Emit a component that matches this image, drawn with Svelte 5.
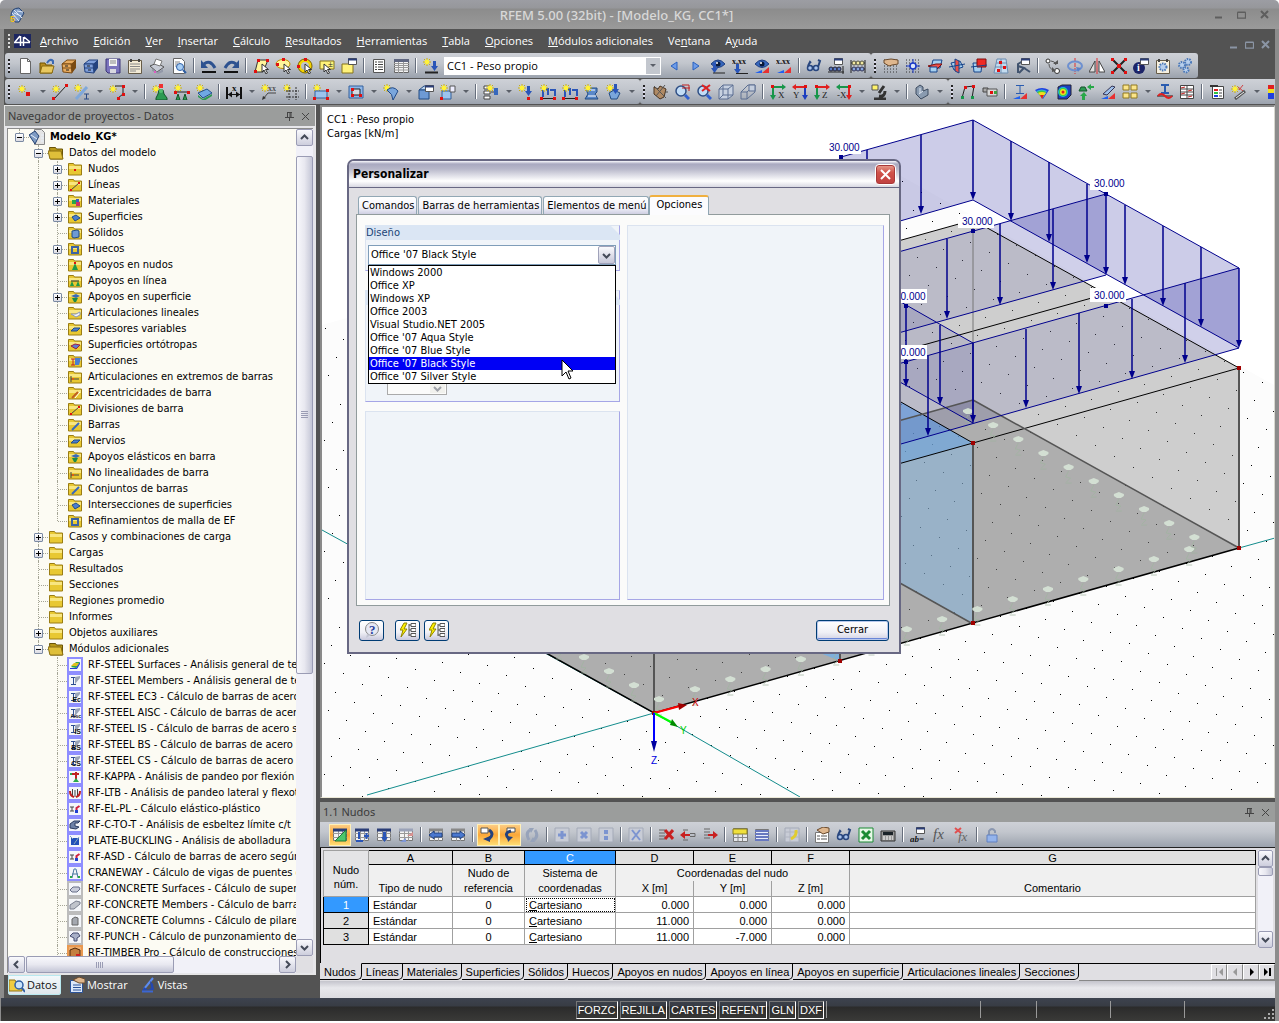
<script>
    // small drawing helpers for the 16x16 icons
    const ln = (d, c = '#222', w = 1) => `<path d="${d}" fill="none" stroke="${c}" stroke-width="${w}"/>`;
    const fl = (d, c, s = 'none') => `<path d="${d}" fill="${c}" stroke="${s}"/>`;
    const sq = (x, y, c = '#e01010', n = 3) => `<rect x="${x}" y="${y}" width="${n}" height="${n}" fill="${c}"/>`;
    const tx = (x, y, t, c = '#222', n = 8, extra = '') => `<text x="${x}" y="${y}" font-size="${n}" fill="${c}" font-family="Liberation Serif, serif" ${extra}>${t}</text>`;
    const star = (x = 0, y = 0) =>
        ln(`M${x + 4} ${y}v8M${x} ${y + 4}h8M${x + 1} ${y + 1}l6 6M${x + 7} ${y + 1}l-6 6`, '#c8ae10') +
        `<circle cx="${x + 4}" cy="${y + 4}" r="2.4" fill="#fff23a"/>`;
    const cursor = (x, y) => fl(`M${x} ${y}v8l2-2 2 4 1.500-1-2-3.500h3z`, '#fff', '#333');
    const arrow = (x, y, c = '#2a55b8') => fl(`M${x} ${y}h3v5h2l-3.500 5-3.500-5h2z`, c);
    const win = (x, y, c = '#fff') => fl(`M${x + 0.5} ${y + 0.5}h8v6h-8z`, c, '#555') + ln(`M${x} ${y + 1.5}h9`, '#2b3e78', 2);
    const eye = fl('M1 6q7-8 14 0q-7 7-14 0z', '#3768bd', '#1e3d80') + '<circle cx="8" cy="6" r="2.500" fill="#081838"/><circle cx="7" cy="5" r="1" fill="#fff"/>';
    const diagram = fl('M1 15h7v-3z', '#2060f0') + fl('M8 15h7v-6z', '#e83030');
    const dots = [2, 5, 8, 11, 14].map((a) => ln(`M1 ${a}h14`, '#333', 1).replace('/>', ' stroke-dasharray="1 2"/>')).join('');
    const glasses = '<g fill="#a9c4ee" stroke="#28467e" stroke-width="1.500"><circle cx="4" cy="10" r="2.500"/><circle cx="10" cy="10" r="2.500"/></g>' + ln('M2 8l2-4 1 1M6 9h2M12 9l2-6-2-1', '#28467e', 2);
    const gear = (x, y, r, c = '#4a78b8') => `<circle cx="${x}" cy="${y}" r="${r}" fill="#b8cfec" stroke="${c}" stroke-width="2" stroke-dasharray="1.500 1"/>`;
    const sheet = (head) => fl('M1.500 2.500h13v11h-13z', '#f4f4f4', '#777') + ln('M1 6.500h14M1 10.500h14M6.500 3v11M10.500 3v11', '#999') + ln('M1 3h14', head, 3);
    const cabinet = (c, d) => fl('M1 6l5-4h9l-4 4z', c, d) + fl('M1 6h9l1 9-9-1z', c, d) + fl('M10 6l5-4v8l-4 5z', d) + ln('M1 10h10', d) + ln('M4 8h3M5 12h3', '#222');
    const plane = (c1, c2) => fl('M2 5l9-2 3 6-9 3z', c1, '#17448a') + fl('M6 1l4 2v12l-4-2z', c2, '#17448a') + ln('M0 9l16-3', '#17448a');
    const person = fl('M7 6h4l1 4 3 4v2H4v-2l2-4z', '#2d9a52', '#14542a') + '<circle cx="9" cy="7" r="2" fill="#53bd70"/>';
    const axes = (c1, c2, t) => ln('M2 3h11', c1, 2) + fl('M12 0l4 3-4 3z', c1) + ln('M3 3v11', c2, 2) + fl('M0 11h6l-3 5z', c2) + sq(1, 1) + tx(8, 14, t, '#222', 9);
    const axesLeft = (c1, c2, t) => ln('M3 3h11', c1, 2) + fl('M4 0L0 3l4 3z', c1) + ln('M13 3v11', c2, 2) + fl('M10 11h6l-3 5z', c2) + sq(12, 1) + tx(1, 14, t, '#222', 9);
    const folderTabs = [[1, 1], [9, 1], [1, 9], [9, 9]].map(([x, y]) => fl(`M${x} ${y}h6v5H${x}z`, '#fbe58a', '#907820')).join('');

    const icons = {
        app: fl('M2 9q0-8 8-8l5 5-5 9H6z', '#7e9bc4', '#254272') + ln('M5 3l8 8M3 6l7 8M14 5L8 4M12 9L5 6', '#dfe9f8') + `<text x="1" y="15" font-size="9" font-weight="700" fill="#f5c518" font-family="Liberation Sans">5</text>`,
        new: fl('M3.500 .5h7l3 3v12h-10z', '#fff', '#666') + ln('M10.500 .5v3h3', '#666'),
        open: fl('M1 5h5l1 2h6v8H1z', '#b98d20', '#705400') + fl('M3 8h12l-2 7H1z', '#e8c860', '#8a6a10') + ln('M8 5q3-5 6-2v3', '#3a6ab4', 2),
        cabinet: cabinet('#e8ac60', '#7a4a12'),
        cabinet2: cabinet('#7f9fda', '#23427f'),
        save: fl('M1 1h14v14H3l-2-2z', '#7b74bd', '#3c3678') + fl('M4 1h8v7H4z', '#f4f4f4') + ln('M5 3h6M5 5h6', '#888') + fl('M5 11h6v4H5z', '#d8d8e0'),
        props: fl('M1.500 2.500h13v13h-13z', '#f3ebd6', '#665c48') + ln('M3 6h10M3 8.500h10M3 11h10M3 13h6', '#888') + ln('M4 1v3M12 1v3', '#444', 2),
        print: fl('M1 8l7-3 7 4-7 5z', '#c8ccd6', '#555') + fl('M5 6L7 1l6 2-2 5z', '#fff', '#777') + fl('M3 11l6 3 5-3v3l-5 2-6-3z', '#9298a8') + sq(5, 13, '#df5ac0', 2),
        preview: fl('M2.500 .5h8l3 3v12h-11z', '#fff', '#666') + ln('M4 4h5M4 6h3M4 8h3', '#888') + '<circle cx="9" cy="9" r="3.500" fill="#a9cff5" stroke="#2f5fa5"/>' + ln('M12 12l3 3', '#2f5fa5', 2),
        undo: ln('M3 6q6-5 11 4', '#2d5290', 3) + fl('M0 2v8h7z', '#2d5290') + ln('M1 14h14', '#111', 2),
        redo: ln('M13 6Q7 1 2 10', '#2d5290', 3) + fl('M16 2v8H9z', '#2d5290') + ln('M1 14h14', '#111', 2),
        selpoly: fl('M5 2l10 0-5 12H2z', '#fff59a', '#333') + sq(4, 1) + sq(13, 1) + sq(1, 12) + cursor(9, 6),
        selellipse: '<ellipse cx="8" cy="6" rx="7" ry="4.500" fill="#fff59a" stroke="#c09000"/>' + sq(1, 5) + sq(7, 0) + cursor(9, 6),
        selring: '<circle cx="8" cy="8" r="5.500" fill="none" stroke="#f4d400" stroke-width="3"/><circle cx="8" cy="8" r="7" fill="none" stroke="#7c6400"/>' + sq(7, 0) + sq(0, 7) + cursor(8, 6),
        selpm: fl('M1 3h14v8H1z', '#fff27a', '#86751a') + tx(9, 9, '±', '#222', 9) + cursor(5, 6),
        selnote: fl('M1 6h11v9H1z', '#fff27a', '#86751a') + win(7, 0),
        doclist: fl('M2.500 1.500h11v13h-11z', '#fff', '#555') + ln('M4 4h2M7 4h5M4 6.500h2M7 6.500h5M4 9h2M7 9h5M4 11.500h2M7 11.500h5', '#444'),
        grid: fl('M1.500 1.500h14v13h-14z', '#f4f4f4', '#666') + ln('M1 5.500h15M1 7.500h15M1 9.500h15M1 12h15M5.500 4v11M10.500 4v11', '#999') + ln('M1 2.500h15', '#5f6680', 3),
        loadnew: star() + arrow(10, 3) + ln('M2 14.500h13', '#222', 2),
        prev: fl('M11 4v8L5 8z', '#6f9ce8', '#2a62c0'),
        next: fl('M5 4v8l6-4z', '#6f9ce8', '#2a62c0'),
        eyeload: eye + arrow(3, 5) + ln('M3 15h12', '#222'),
        xxload: tx(0, 6, 'x.xx', '#111', 8, 'font-weight="700"') + arrow(4, 6) + ln('M4 15.500h12', '#222'),
        eyediag: eye + diagram,
        xxdiag: tx(0, 6, 'x.xx', '#111', 8, 'font-weight="700"') + diagram,
        glasses,
        winbeads: win(6, 0) + '<g fill="#5b7dc8" stroke="#223"><circle cx="3" cy="11" r="2"/><circle cx="7" cy="11" r="2"/><circle cx="11" cy="11" r="2"/></g>' + ln('M0 14h16M15 8v8', '#222'),
        beads: ln('M1 5h14M1 11h14M1 2v13M15 2v13', '#222') + '<g fill="#f2e9a0" stroke="#554"><circle cx="4" cy="5" r="2"/><circle cx="8" cy="5" r="2"/><circle cx="12" cy="5" r="2"/></g><g fill="#86a7e0" stroke="#335"><circle cx="4" cy="11" r="2"/><circle cx="8" cy="11" r="2"/><circle cx="12" cy="11" r="2"/></g>',
        handgrid: dots + fl('M1 2l7-1 7 1v4l-6 1-3 1-5-3z', '#dfb78e', '#6a4a2c'),
        snapgrid: dots + ln('M8 1v14M1 8h14', '#1838c8') + '<circle cx="8" cy="8" r="3" fill="#dce6fa" stroke="#1838c8" stroke-width="1.500"/>',
        plane1: fl('M6 2l9 0-2 8H4z', '#a6d0f0', '#17448a') + fl('M1 8l8-2 6 0-5 5z', '#f05048', '#7c1010') + fl('M3 9h7v5H3z', '#a6d0f0', '#17448a'),
        plane2: plane('#a6d0f0', '#e85048'),
        plane3: fl('M2 5h9l-1 9H3z', '#a6d0f0', '#17448a') + fl('M6 1h9v8H6z', '#f02a24', '#7c1010') + ln('M0 9l16-2', '#17448a'),
        plane4: fl('M4 1h9l2 14H1z', '#c4dcf0', '#6d8db0') + ln('M2 9h12M3 5h11M8 1v14', '#6d8db0') + sq(6, 3) + sq(10, 8) + sq(4, 11),
        struct: ln('M3 15V6l5-3M3 8l6 2-5 5M9 10l6 4', '#41536e', 2) + win(6, 0),
        copynode: '<g fill="#fff" stroke="#333"><circle cx="3" cy="3" r="2"/><circle cx="12" cy="13" r="2.500"/></g>' + ln('M6 3q4 0 5 4M4 6q0 5 5 6', '#555') + fl('M8 6h5v-4zM7 14v-5l4 4z', '#555'),
        rotate: ln('M8 0v16', '#e03030').replace('/>', ' stroke-dasharray="4 1"/>') + '<ellipse cx="8" cy="8" rx="7" ry="4.500" fill="none" stroke="#6d90d0" stroke-width="2"/>' + fl('M9 9l5 1-3 4z', '#5a80c8'),
        mirror: fl('M6 3v11H0z', '#dfdfdf', '#444') + fl('M10 3v11h6z', '#fff', '#444') + ln('M8 0v16', '#e03030'),
        delnode: ln('M2 2l12 12M14 2L2 14', '#222', 2) + sq(0, 0) + sq(13, 0) + sq(0, 13) + sq(13, 13) + sq(6, 6, '#e01010', 4),
        info: '<circle cx="6" cy="10" r="6" fill="#1c2468"/><text x="4" y="13" font-size="10" font-weight="700" fill="#fff" font-family="Liberation Serif">i</text>' + win(7, 0),
        calcset: fl('M1.500 2.500h13v13h-13z', '#f6f0e0', '#665c48') + gear(8, 9, 3.5) + ln('M4 1v3M12 1v3', '#444', 2),
        gears: gear(11, 4, 3) + gear(5, 7, 3) + gear(9, 12, 2.5),
        node: star(1, 1) + sq(9, 8, '#e01010', 4),
        line: star(0, 1) + ln('M2 15L14 2', '#222') + sq(0, 13) + sq(13, 0),
        member: star(0, 0) + ln('M2 15L13 3', '#7fa8da', 3) + ln('M10 10h5M10 15h5M12.500 10v5', '#2a4a84'),
        poly: star(0, 1) + ln('M6 2h8v8l-5 4', '#222') + sq(13, 1) + sq(8, 13) + sq(13, 9),
        supnode: star(0, 1) + person + sq(7, 0, '#f03030', 4),
        supline: star(0, 0) + ln('M1 8h14', '#222') + sq(13, 7) + sq(0, 7) + fl('M4 10l2 6H2zM11 10l2 6H9z', '#2d9a52', '#14542a'),
        supsurf: star(0, 0) + fl('M2 11l5 4 9-5v2l-8 5-6-4z', '#2d9a52') + fl('M2 9l9-4 5 4-9 5z', '#6fa8e4', '#23508c'),
        dim: ln('M1 3v12M15 3v12', '#111', 2) + ln('M1 10.500h14', '#111') + fl('M2 10.500l4-3v6zM14 10.500l-4-3v6z', '#111') + tx(6, 7, 'x', '#111', 9, 'font-weight="700"'),
        xx: star(0, 0) + tx(7, 7, 'xx', '#222', 8) + ln('M2 15l5-6h8', '#444') + fl('M1 16l1-4 3 2z', '#333'),
        gridnew: star(0, 0) + ln('M3 7h13M3 13h13M6 3v13M13 3v13', '#333').replace('/>', ' stroke-dasharray="2 1"/>'),
        rect: star(0, 0) + fl('M2 7h12v7H2z', '#9cc4ee', '#35609c') + sq(0, 13) + sq(13, 13) + sq(13, 5),
        opening: fl('M1 2h14v12H1z', '#8db6e8', '#35609c') + fl('M4 5h8v6H4z', '#d4dae4', '#222') + sq(3, 4) + sq(11, 10) + sq(3, 10),
        shell: star(0, 0) + fl('M4 6q6-5 11 1l-5 9q0-6-6-10z', '#7aa6dc', '#1f4888'),
        solid: fl('M1 6l5-4h9l-4 4z', '#b8d2f0', '#234c84') + fl('M1 6h10v9H1z', '#6e9ad4', '#234c84') + win(7, 1),
        boxes: fl('M2 7h9v8H2z', '#9cc4ee', '#35609c') + fl('M10 2h5v6h-5z', '#eef', '#555') + star(0, 0) + sq(0, 13),
        seq: fl('M1 2h6v3H1zM1 7h6v3H1zM1 12h6v3H1z', '#fff', '#444') + ln('M8 8h4', '#444') + fl('M11 4h4v7h-4z', '#3768bd') + star(3, 0),
        nload: star(0, 0) + arrow(9, 2) + sq(9, 13),
        mload: ln('M3 5h5v6M10 6h5v6M3 5v8', '#2a55b8', 2) + ln('M1 14.500h14', '#222') + star(0, 0) + sq(0, 13) + sq(13, 13),
        sload: fl('M3 4h10v4l-2 2 3 5H1l3-5-1-2z', '#5a88c8', '#234c84') + ln('M5 6h6M4 12h8', '#fff') + star(0, 0),
        freeload: star(0, 0) + fl('M3 9l5-3 6 3-3 6H5z', '#7aa6dc', '#234c84') + arrow(8, 0),
        hand: fl('M2 3l4 2 2-3 6 3-2 8-4 2-6-5z', '#b08a64', '#4a3420') + ln('M2 2l12 12M13 1L4 12M13 8h3', '#555'),
        zoom: '<circle cx="7" cy="7" r="5" fill="#c2dcf6" stroke="#2f4f85" stroke-width="1.500"/>' + ln('M11 11l4 4', '#2f5fd0', 3) + ln('M8 1h7v6M8 4h8', '#c02020'),
        zoomx: '<circle cx="7" cy="7" r="5" fill="#c2dcf6" stroke="#2f4f85" stroke-width="1.500"/>' + ln('M11 11l4 4', '#2f5fd0', 3) + ln('M6 1l8 6M14 1L6 7', '#e02020', 2),
        cubewire: fl('M1 5l4-4h10v10l-5 4H1z', '#c6d0e0') + ln('M1 5h9v10H1zM1 5l4-4h10v10l-5 4M10 5l5-4M5 1v10h10M1 15l4-4', '#5c6f92'),
        cubes: ln('M1 8h6v7H1zM1 8l7-7h7v7l-8 7M7 8l8-7', '#5c6f92') + fl('M9 1h6v6H9z', '#c4cede', '#5c6f92'),
        axisx: axes('#18964a', '#18964a', 'X'),
        axisy: axesLeft('#e02020', '#1c3ec0', 'Y'),
        axisz: axes('#e02020', '#18964a', 'Z'),
        axisnx: axesLeft('#18964a', '#e02020', '-X'),
        microscope: fl('M1 1h6v5H1z', '#fff36a', '#555') + ln('M13 2L8 9M3 15h12M8 12q6 1 6-5', '#333', 3),
        solidgray: fl('M2 4l4-3 3 2v4l5-2v6l-7 4-5-5z', '#8a9bb0', '#3e4c60') + ln('M9 7l-4 3M6 4v5', '#dfe6f0'),
        frame: ln('M2 14L5 3l9-1-2 12', '#222', 1) + sq(4, 2) + sq(12, 1) + sq(1, 12, '#18964a') + sq(11, 12, '#18964a'),
        usb: fl('M1 4h5v4H1z', '#aaa', '#444') + fl('M5 5h10v7H5z', '#d8d8d8', '#555') + sq(8, 7) + sq(12, 7, '#40a040'),
        ibeam: ln('M4 1.500h8M4 9.500h8M8 1v8', '#2a5cb0', 1) + diagram,
        rainbow: fl('M1 6q7-4 14 0l-6 9z', '#2040e0') + fl('M2 7q6-3 11 0l-4 7z', '#30b0e0') + fl('M3 8q5-3 9 0l-4 6z', '#40c840') + fl('M4 9q4-2 8 0l-4 5z', '#f0e020') + fl('M6 11h4l-2 4z', '#e02020'),
        fecube: fl('M2 3l4-2h9v10l-4 4H2z', '#1c3ec0', '#223') + '<circle cx="7" cy="8" r="5" fill="#20c0d0"/><circle cx="7" cy="8" r="4" fill="#40d040"/><circle cx="7" cy="8" r="3" fill="#f0e020"/><circle cx="7" cy="8" r="1.500" fill="#e02020"/>',
        reaction: fl('M3 3h4l2 4H1z', '#2d9a52', '#14542a') + fl('M9 3l4-3v2h3v2h-3v2zM4 16v-4H2l4-4 3 4H7v4z', '#28a848'),
        knife: fl('M3 10L12 2l3 1-8 8z', '#9fc0ea', '#335') + diagram,
        tiles: folderTabs,
        beamcurve: ln('M4 1h8M8 1v8M4 9h8', '#2a5cb0', 2) + ln('M0 12h16', '#222') + ln('M1 12q3-4 7 0t7 0', '#e02020', 2),
        panels: fl('M1.500 1.500h13v13h-13z', '#fff', '#444') + ln('M1 5h14M1 8h14M1 11h14M8 1v14', '#444') + ln('M2 4l4-1M9 7l4-1M2 10l4-1M9 13l4-1', '#c02020'),
        legend: fl('M3.500 2.500h11v12h-11z', '#fff', '#444') + ln('M1 2h8', '#333', 2) + ln('M5 6h4', '#e02020', 2) + ln('M5 9h4', '#30c040', 2) + ln('M5 12h4', '#2040e0', 2) + ln('M10 6h3M10 9h3M10 12h3', '#444'),
        wand: star(0, 1) + ln('M7 3l5 4M12 1L8 6', '#d04040') + ln('M4 15L14 7', '#555', 3) + ln('M5 14l8-6', '#eee'),
        scale: fl('M2 1h6v14H2z', '#e02020') + fl('M2 5h6v4H2z', '#f0e020') + fl('M2 9h6v6H2z', '#2040e0'),
        // table toolbar
        tgreen: sheet('#2b3e78') + fl('M3 14L14 3v11z', '#4cc86c', '#1c7a38'),
        tplus: sheet('#2b3e78') + ln('M5 5v7M2 14h7M10 9h5M12.500 6v6', '#2a55b8', 2),
        tdown: sheet('#2b3e78') + arrow(7, 5),
        tdiag: sheet('#9aa2b8') + fl('M2 15h6v-4z', '#8098d8') + fl('M9 9h6V5z', '#d89090'),
        tleft: sheet('#888') + fl('M1 8l5-4v2h8v4H6v2z', '#4a78d0', '#23427f'),
        tright: sheet('#888') + fl('M15 8l-5-4v2H2v4h8v2z', '#4a78d0', '#23427f'),
        selin: fl('M1 1h7v5H1z', '#fff', '#555') + ln('M9 3q6 4 0 9', '#24417e', 3) + fl('M3 12l7-3v6z', '#24417e'),
        selout: fl('M5 1h8v4H5z', '#fff', '#555') + ln('M9 4Q1 6 7 12', '#24417e', 3) + fl('M11 10l-5 5-1-6z', '#24417e'),
        cycle: ln('M6 3Q1 6 5 13M10 13q5-4 1-10', '#97a3ba', 3) + fl('M5 1h5L7 6zM11 15H6l3-5z', '#97a3ba'),
        gplus: fl('M1 1h14v14H1z', '#c8ccd6', '#a4aab8') + ln('M8 4v8M4 8h8', '#7c94d0', 3),
        gcross: fl('M1 1h14v14H1z', '#c8ccd6', '#a4aab8') + ln('M5 5l6 6M11 5l-6 6', '#7c94d0', 3),
        gsem: fl('M1 1h14v14H1z', '#c8ccd6', '#a4aab8') + sq(6, 3, '#7c94d0', 4) + sq(6, 9, '#7c94d0', 4),
        gx: fl('M1 1h14v14H1z', '#c8ccd6', '#a4aab8') + ln('M4 3l8 10M12 3L4 13', '#7c94d0', 2),
        rowdel: ln('M1 3h6M1 6h6M1 9h6M1 12h6', '#666') + ln('M7 3l8 9M15 3l-8 9', '#c82020', 3),
        rowleft: fl('M0 8l5-4v3h5v2H5v3z', '#c82020') + ln('M10 6.500h5v3h-5M3 3h5M3 13h5', '#666'),
        rowright: fl('M16 8l-5-4v3H6v2h5v3z', '#c82020') + ln('M2 5h6M2 8h4M2 11h6M2 2h6', '#666'),
        tyellow: fl('M1.500 1.500h14v13h-14z', '#e6e8ec', '#777') + fl('M1 2h14v5H1z', '#f0e03c', '#8a8020') + ln('M1 10.500h14M6 7v7M10.500 7v7', '#888'),
        tblue: fl('M1.500 2.500h13v11h-13z', '#e8ecfa', '#777') + ln('M1 4h14M1 7h14M1 10h14M1 13h14', '#6878c0', 2),
        tjump: fl('M1 1h14v14H1z', '#c8ccd6', '#a4aab8') + ln('M1 5h14M1 10h14M6 1v14', '#b0b4c0') + ln('M12 3q1 6-5 9', '#e0cc30', 3),
        tprops: fl('M1.500 5.500h13v10h-13z', '#fff', '#777') + fl('M3 3l6-3 6 1v4L9 7z', '#dfb78e', '#6a4a2c') + ln('M3 9h3M7 9h6M3 12h3M7 12h6', '#555'),
        excel: fl('M1 1h14v14H1z', '#e8f8e8', '#1b8a34') + ln('M4 4l8 8M12 4l-8 8', '#1b8a34', 3),
        calc: fl('M1 4h14v10H1z', '#999', '#333') + fl('M3 5h10v3H3z', '#1a2228') + ln('M3 10h10M3 12h10', '#fff').replace('/>', ' stroke-dasharray="2 1"/>'),
        ab: win(6, 0) + tx(0, 15, 'ab=', '#111', 9, 'font-style="italic" font-weight="700"'),
        fx: tx(1, 12, 'fx', '#555', 15, 'font-style="italic"'),
        fxx: tx(4, 14, 'fx', '#666', 13, 'font-style="italic"') + ln('M1 1l6 5M7 1L1 6', '#e05050', 2),
        lock: ln('M5 8V4q3-4 6 0v2', '#8a97b0', 2) + fl('M3 8h10v7H3z', '#94b4ec', '#6080c0'),
        // navigator tabs
        tabdata: fl('M0 3h6l1 2h6v9H0z', '#f0cc40', '#90741a') + '<circle cx="10" cy="8" r="4" fill="#c8e2fa" stroke="#2f5fa5" stroke-width="1.500"/>' + ln('M13 11l3 4', '#2f5fa5', 2),
        tabshow: fl('M1.500 3.500h12v12h-12z', '#dce8fa', '#2a5298') + ln('M4 8h8M4 10.500h8M4 13h8', '#2a5298') + fl('M4 3l6-3 6 2v4l-6 0z', '#dfb78e', '#6a4a2c'),
        tabview: ln('M13 1L4 12', '#5c8cf0', 2) + fl('M2 14l2-4 4 3zM10 4l3 3 1 6H8l3-2z', '#2448b0') + ln('M2 14.500h11', '#3c66d0', 2),
        root: fl('M5.500 .5h7l3 3v12h-10z', '#e4e4e4', '#888') + fl('M0 6l6-4 4 5-4 8z', '#7e9bc4', '#254272') + ln('M2 6l6 4M12 6h3M12 9h3M12 12h3', '#e8f0fa'),
        bolt: fl('M4 1L0 8h3l-2 7 6-8H4l3-6z', '#fff200', '#908400') + ln('M9 2v12M9 3h2M9 8h2M9 13h2', '#555') + fl('M11 1.500h5v3h-5zM11 6.500h5v3h-5zM11 11.500h5v3h-5z', '#fff', '#555'),
        help: '<circle cx="8" cy="7" r="6.500" fill="#e6e8f4" stroke="#888"/>' + fl('M3 12l-1 4 5-3z', '#c4c6d4') + `<text x="5" y="12" font-size="13" font-weight="700" fill="#2a3f9c" font-family="Liberation Serif">?</text>`,
    };

    // glyphs placed on the yellow tree folders
    const folder = fl('M1.500 2.500h5l1 1.500h7v10h-13z', '#e8c832', '#9a7d14') + fl('M2 5h12v3H2z', '#f8e680');
    const openFolder = fl('M1.500 2.500h6l1 1.500h6v10h-12z', '#b89818', '#6a5408') + fl('M0 6h13l2 8H2z', '#dfbf3a', '#8a6f10');
    const glyphs = {
        node: sq(7, 8, '#e01010', 2),
        line: ln('M4 13l8-7', '#444') + sq(3, 12, '#e01010', 2) + sq(11, 5, '#e01010', 2),
        mat: sq(5, 7, '#28a848', 4) + sq(9, 9, '#d03060', 4) + sq(9, 6, '#3a5cc0', 3),
        surf: fl('M5 8l4-2 4 3-5 3z', '#4a7ed0', '#234c84'),
        solid: fl('M5 6l5-1 2 1v6l-5 1-2-1z', '#6e9ad4', '#234c84'),
        hole: ln('M5 6h6v6H5z', '#3c62a4', 2),
        sup: fl('M8 6l3 7H5z', '#1f9a48') + sq(7, 5, '#e01010', 2),
        supl: ln('M4 8h8', '#222') + fl('M5 8l2 5H3zM11 8l2 5H9z', '#1f9a48'),
        sups: fl('M4 7l5-2 4 2-4 2z', '#3a6ab8') + fl('M5 9h6l-2 4H7z', '#1f8a48'),
        joint: fl('M4 9h5l4-2v3l-4 2z', '#f4f4f8', '#8a98b8'),
        thick: fl('M4 10l3-3h6l-3 3z', '#4a7ed0', '#234c84'),
        ortho: fl('M4 9l4-2 5 1-4 4z', '#5a7ed0', '#a02040'),
        sect: ln('M4 6h4M6 6v6M4 12h4', '#c02020') + fl('M8 5h6l-2 7H8z', '#4a7ed0'),
        hinge: ln('M4 10h8M4 7v6', '#444') + sq(5, 9, '#e06010', 2),
        ecc: ln('M5 13l6-6', '#c06020', 2) + ln('M8 13l5-6', '#fff'),
        bar: ln('M5 13l7-7', '#3768bd', 2),
    };

    const data = [
        { name: 'Datos del modelo', exp: '-', kids: [
            ['Nudos', 'node', '+'], ['Líneas', 'line', '+'], ['Materiales', 'mat', '+'], ['Superficies', 'surf', '+'],
            ['Sólidos', 'solid'], ['Huecos', 'hole', '+'], ['Apoyos en nudos', 'sup'], ['Apoyos en línea', 'supl'],
            ['Apoyos en superficie', 'sups', '+'], ['Articulaciones lineales', 'joint'], ['Espesores variables', 'thick'],
            ['Superficies ortótropas', 'ortho'], ['Secciones', 'sect'], ['Articulaciones en extremos de barras', 'hinge'],
            ['Excentricidades de barra', 'ecc'], ['Divisiones de barra', 'line'], ['Barras', 'bar'], ['Nervios', 'thick'],
            ['Apoyos elásticos en barra', 'sups'], ['No linealidades de barra', 'hinge'], ['Conjuntos de barras', 'bar'],
            ['Intersecciones de superficies', 'surf'], ['Refinamientos de malla de EF', 'hole'],
        ] },
        { name: 'Casos y combinaciones de carga', exp: '+', kids: [] },
        { name: 'Cargas', exp: '+', kids: [] },
        { name: 'Resultados', exp: '', kids: [] },
        { name: 'Secciones', exp: '', kids: [] },
        { name: 'Regiones promedio', exp: '', kids: [] },
        { name: 'Informes', exp: '', kids: [] },
        { name: 'Objetos auxiliares', exp: '+', kids: [] },
        { name: 'Módulos adicionales', exp: '-', kids: [
            ['RF-STEEL Surfaces - Análisis general de tensiones', 'm0'], ['RF-STEEL Members - Análisis general de tensiones', 'm1'],
            ['RF-STEEL EC3 - Cálculo de barras de acero según', 'm1', '', 'Ec'], ['RF-STEEL AISC - Cálculo de barras de acero según', 'm1', '', 'Aisc'],
            ['RF-STEEL IS - Cálculo de barras de acero según', 'm1', '', 'IS'], ['RF-STEEL BS - Cálculo de barras de acero según', 'm1', '', 'BS'],
            ['RF-STEEL CS - Cálculo de barras de acero según', 'm1', '', 'CS'], ['RF-KAPPA - Análisis de pandeo por flexión', 'm2'],
            ['RF-LTB - Análisis de pandeo lateral y flexotorsional', 'm3'], ['RF-EL-PL - Cálculo elástico-plástico', 'm4'],
            ['RF-C-TO-T - Análisis de esbeltez límite c/t', 'm5'], ['PLATE-BUCKLING - Análisis de abolladura', 'm6'],
            ['RF-ASD - Cálculo de barras de acero según', 'm4'], ['CRANEWAY - Cálculo de vigas de puentes grúa', 'm7'],
            ['RF-CONCRETE Surfaces - Cálculo de superficies', 'c0'], ['RF-CONCRETE Members - Cálculo de barras de', 'c1'],
            ['RF-CONCRETE Columns - Cálculo de pilares de', 'c2'], ['RF-PUNCH - Cálculo de punzonamiento de superficies', 'c3'],
            ['RF-TIMBER Pro - Cálculo de construcciones de madera', 't0'],
        ] },
    ];

    const modArt = {
        m0: fl('M4 10l5-5h4l-4 6z', '#30a848') + fl('M4 9l3-3 5 0-2 3z', '#e0c020') + fl('M3 11h6l4-6v2l-3 5H3z', '#2040d0'),
        m1: ln('M4 4.500h5M6.500 4v7M4 11.500h5', '#2c4c90') + fl('M8 4l5-1v2l-5 6z', '#9aa4b8'),
        m2: ln('M9 3v9M4 5h8', '#c02020', 2) + fl('M9 9l3 4H6z', '#28a848') + sq(3, 4, '#28a848', 2),
        m3: ln('M5.500 4v7M10.500 4v7M8 5v7', '#444') + ln('M3 6q0 5 4 6M13 6q0 5-4 6', '#c02020', 2),
        m4: ln('M3 6h4M5 6v4M3 10h4', '#444') + ln('M9.500 11V7l3-2', '#d02040', 2) + sq(8, 9, '#2040d0', 3),
        m5: fl('M3 7l4-3h6l-2 2H8v3l4 1-3 2-6-1z', '#6e82a8', '#2c3c60'),
        m6: fl('M4 5h8v7H4z', '#2050b8') + ln('M3 3l3 3M12 4l-5 7', '#8ab'),
        m7: ln('M5 13l2-9h2l2 9M5 9h6', '#4878a0') + sq(3, 11, '#28a848', 2) + sq(11, 11, '#28a848', 2),
        c0: fl('M3 9l3-3h6l1 2-3 3H5z', '#c8ccda', '#666e88'),
        c1: fl('M3 8l6-4 4 1v2l-6 5H3z', '#c0c4cc', '#7a8090'),
        c2: fl('M5 6l3-2 3 1v7H5z', '#a4a8b0', '#666'),
        c3: fl('M3 7l3-3h5l2 3-3 2v3H7V9z', '#a8b0c8', '#444c70'),
        t0: fl('M3 5l5-2 5 2v8H3z', '#c48040', '#502808') + sq(9, 9, '#d02020', 4),
    };

    function moduleIcon(kind, label) {
        const frame = kind[0] === 'm' ? '#8e8eff' : kind[0] === 'c' ? '#bcbcbc' : '#e89850';
        let art = `<rect x="1" y="1" width="14" height="14" fill="${kind[0] === 't' ? '#f0b070' : '#f4f6fa'}" stroke="${frame}" stroke-width="2"/>` + modArt[kind];
        if (label) art += `<text x="14" y="13" text-anchor="end" font-size="${label.length > 2 ? 5 : 7}" font-weight="700" fill="#111" font-family="Liberation Sans">${label}</text>`;
        return art;
    }

    // flatten the tree, noting which guide lines run past each row
    const rows = [{ name: 'Modelo_KG*', level: 0, exp: '-', art: icons.root, guides: [], last: true, bold: true }];
    data.forEach((group, g) => {
        const lastGroup = g === data.length - 1;
        rows.push({ name: group.name, level: 1, exp: group.exp, art: group.exp === '-' ? openFolder : folder, guides: [false], last: lastGroup });
        group.kids.forEach(([name, glyph, exp, label], k) => {
            const art = glyphs[glyph] ? folder + glyphs[glyph] : moduleIcon(glyph, label);
            rows.push({ name, level: 2, exp: exp || '', art, guides: [false, !lastGroup], last: !lastGroup && k === group.kids.length - 1 });
        });
    });

    const menus = [['', 'A', 'rchivo'], ['', 'E', 'dición'], ['', 'V', 'er'], ['', 'I', 'nsertar'], ['', 'C', 'álculo'], ['', 'R', 'esultados'],
        ['', 'H', 'erramientas'], ['', 'T', 'abla'], ['', 'O', 'pciones'], ['', 'M', 'ódulos adicionales'], ['Ve', 'n', 'tana'], ['A', 'y', 'uda']];

    const bar1a = 'new open cabinet cabinet2 save props print preview | undo redo | selpoly selellipse selring selpm selnote | doclist grid | loadnew'.split(' ');
    const bar1b = 'prev next eyeload xxload eyediag xxdiag | glasses winbeads beads'.split(' ');
    const bar1c = 'handgrid snapgrid plane1 plane2 plane3 plane4 struct | copynode rotate mirror delnode info calcset gears'.split(' ');
    const bar2a = 'node v line member v poly v | supnode supline supsurf | dim v xx gridnew | rect v opening v shell v solid boxes v | seq v nload mload mload sload freeload v'.split(' ');
    const bar2b = 'hand zoom zoomx cubewire cubes | axisx axisy axisz axisnx v microscope v | solidgray v'.split(' ');
    const bar2c = 'frame usb | ibeam rainbow fecube reaction knife tiles v beamcurve panels | legend wand v scale'.split(' ');
    const tableBar = '*tgreen tplus tdown tdiag | tleft tright | *selin *selout cycle | gplus gcross gsem | gx | rowdel rowleft rowright | tyellow tblue | tjump | tprops glasses excel calc | ab fx fxx | lock'.split(' ');

    const styles = ['Windows 2000', 'Office XP', 'Windows XP', 'Office 2003', 'Visual Studio.NET 2005', "Office '07 Aqua Style",
        "Office '07 Blue Style", "Office '07 Black Style", "Office '07 Silver Style"];
    let chosen = $state("Office '07 Black Style");

    const dialogTabs = ['Comandos', 'Barras de herramientas', 'Elementos de menú', 'Opciones'];
    const letters = ['A', 'B', 'C', 'D', 'E', 'F', 'G'];
    const nudos = [['0.000', '0.000', '0.000'], ['11.000', '0.000', '0.000'], ['11.000', '-7.000', '0.000']];
    const sheets = ['Nudos', 'Líneas', 'Materiales', 'Superficies', 'Sólidos', 'Huecos', 'Apoyos en nudos', 'Apoyos en línea',
        'Apoyos en superficie', 'Articulaciones lineales', 'Secciones'];
    const toggles = ['FORZC', 'REJILLA', 'CARTES', 'REFENT', 'GLN', 'DXF'];

    // work plane grid in screen coordinates
    const grid = [];
    for (let i = -50; i <= 60; i++) {
        for (let j = -60; j <= 50; j++) {
            const x = Math.round(654 + 26.59 * i + 18.96 * j);
            const y = Math.round(713 - 7.5 * i + 10.57 * j);
            if (x < 322 || x > 1273 || y > 796) continue;
            if (y < 176 + 0.5575 * (x - 903) || y < 324 - 0.2815 * (x - 325)) continue;
            grid.push(`M${x} ${y}h1v1h-1z`);
        }
    }

    const arrows = [[867, 150, 229], [921, 135, 213], [973, 120, 199], [1011, 141, 220], [1049, 162, 241], [1087, 184, 262], [1106, 194, 274],
        [1125, 205, 284], [1163, 226, 305], [1201, 247, 326], [1239, 268, 347], [1053, 209, 289], [1000, 224, 304], [947, 239, 318],
        [906, 306, 386], [940, 325, 404], [1185, 283, 362], [1132, 299, 378], [1079, 313, 393], [1026, 329, 407], [973, 343, 422], [928, 356, 435]];

    const supports = [];
    for (let i = 0; i < 5; i++) supports.push([659 - 25 * i, 700 - 14 * i]);
    for (let i = 0; i < 15; i++) supports.push([695 + 35.3 * i, 690 - 10 * i]);
    for (let i = 0; i < 10; i++) supports.push([968 + 25.15 * i, 412 + 14 * i]);

    const labels = [[829, 151], [1094, 187], [962, 225], [1094, 299], [895, 300], [895, 356]];
    const loadNodes = [[841, 157], [1106, 194], [973, 231], [1106, 306], [906, 306], [906, 362]];
    const corners = [[1239, 368], [973, 443], [1239, 548], [973, 623], [840, 661], [654, 713]];
</script>

{#snippet icon(art)}
    <svg class="icon" width="16" height="16" viewBox="0 0 16 16" aria-hidden="true">{@html art}</svg>
{/snippet}

{#snippet tools(list)}
    {#each list as t}
        {#if t === '|'}
            <span class="sep"></span>
        {:else if t === 'v'}
            <button class="drop" aria-label="Más"></button>
        {:else}
            <button class="tool" class:on={t[0] === '*'} aria-label={t.replace('*', '')}>{@render icon(icons[t.replace('*', '')])}</button>
        {/if}
    {/each}
{/snippet}

{#snippet chevron(turn)}
    <svg width="9" height="9" viewBox="0 0 9 9" aria-hidden="true"><path d="M1 3l3.500 3.500L8 3" transform="rotate({turn} 4.500 4.500)" fill="none" stroke="#444a58" stroke-width="2" /></svg>
{/snippet}

{#snippet pinClose()}
    <button class="mini" aria-label="Fijar"><svg width="9" height="9" viewBox="0 0 9 9"><path d="M2 .5h5M2.500 1v4M6 1v4M5 1v4M0 5.500h9M4.500 6v3" fill="none" stroke="#444" /></svg></button>
    <button class="mini" aria-label="Cerrar panel"><svg width="9" height="9" viewBox="0 0 9 9"><path d="M1 1l7 7M8 1L1 8" stroke="#444" /></svg></button>
{/snippet}

{#snippet windowButtons(c)}
    <button class="mini" aria-label="Minimizar"><svg width="9" height="9" viewBox="0 0 9 9"><path d="M1 7.500h7" stroke={c} stroke-width="2" /></svg></button>
    <button class="mini" aria-label="Restaurar"><svg width="10" height="9" viewBox="0 0 10 9"><path d="M.5 2h9M.5 2v6.500h9V2" fill="none" stroke={c} stroke-width="1.500" /></svg></button>
    <button class="mini" aria-label="Cerrar ventana"><svg width="9" height="9" viewBox="0 0 9 9"><path d="M1 1l7 7M8 1L1 8" stroke={c} stroke-width="2" /></svg></button>
{/snippet}

<div class="app">
    <header class="title">
        {@render icon(icons.app)}
        <h1>RFEM 5.00 (32bit) - [Modelo_KG, CC1*]</h1>
        <div class="winbtns">{@render windowButtons('#5e5e5e')}</div>
    </header>

    <div class="frame">
        <nav class="menu">
            <span class="grip"></span>
            <svg class="logo" width="17" height="14" viewBox="0 0 17 14" aria-hidden="true">
                <path d="M0 0h17v14H0z" fill="#1c2660" />
                <path d="M0 8.500h16M6.500 2v10M6 2L1 8M9.500 3v9M10 3l6 5" fill="none" stroke="#fff" stroke-width="1.500" />
            </svg>
            {#each menus as [a, b, c]}
                <button class="menuitem">{a}<u>{b}</u>{c}</button>
            {/each}
            <div class="winbtns small">{@render windowButtons('#8b95a5')}</div>
        </nav>

        <div class="bars">
            <div class="bar">
                <span class="grip dark"></span>
                {@render tools(bar1a)}
                <div class="case">
                    <select aria-label="Caso de carga"><option>CC1 - Peso propio</option></select>
                    <span class="casebtn"></span>
                </div>
                {@render tools(bar1b)}
            </div>
            <div class="bar">
                <span class="grip dark"></span>
                {@render tools(bar1c)}
            </div>
        </div>
        <div class="bars">
            <div class="bar"><span class="grip dark"></span>{@render tools(bar2a)}</div>
            <div class="bar"><span class="grip dark"></span>{@render tools(bar2b)}</div>
            <div class="bar"><span class="grip dark"></span>{@render tools(bar2c)}</div>
        </div>

        <div class="main">
            <aside class="side">
                <div class="panel">
                    <div class="caption"><h2>Navegador de proyectos - Datos</h2>{@render pinClose()}</div>
                    <div class="treebox">
                        <div class="treerow">
                            <ul class="tree">
                                {#each rows as row}
                                    <li>
                                        {#each row.guides as g}<span class="guide" class:line={g}></span>{/each}
                                        <span class="guide own" class:line={!row.last} class:half={row.last}>
                                            {#if row.exp}<button class="exp" class:plus={row.exp === '+'} aria-label="Expandir"></button>{/if}
                                        </span>
                                        {@render icon(row.art)}
                                        <span class="name" class:bold={row.bold}>{row.name}</span>
                                    </li>
                                {/each}
                            </ul>
                            <div class="vscroll">
                                <button aria-label="Subir">{@render chevron(180)}</button>
                                <span class="vthumb"></span>
                                <span class="fill"></span>
                                <button aria-label="Bajar">{@render chevron(0)}</button>
                            </div>
                        </div>
                        <div class="hscroll">
                            <button aria-label="Izquierda">{@render chevron(90)}</button>
                            <span class="hthumb"><i></i></span>
                            <span class="fill"></span>
                            <button aria-label="Derecha">{@render chevron(-90)}</button>
                        </div>
                    </div>
                </div>
                <div class="navtabs">
                    <button class="active">{@render icon(icons.tabdata)}Datos</button>
                    <button>{@render icon(icons.tabshow)}Mostrar</button>
                    <button>{@render icon(icons.tabview)}Vistas</button>
                </div>
            </aside>

            <div class="work">
                <section class="view">
                    <svg class="scene" width="100%" height="100%" role="img" aria-label="Modelo">
                        <g transform="translate(-322 -107)">
                            <path d="M322 325L885 167L1274 385V797H322z" fill="#fcfcfc" />
                            <path d={grid.join('')} fill="#000" shape-rendering="crispEdges" />
                            <path d="M322 530L654 713M367 795L654 713L800 797M1239 548l36-10" fill="none" stroke="#138c8c" />

                            <!-- walls, floor and the blue partition -->
                            <path d="M973 220L1239 368V548L654 713L388 565V385z" fill="#848484" fill-opacity=".38" />
                            <path d="M973 400L1239 548L654 713L388 565z" fill="#656565" fill-opacity=".3" />
                            <path d="M841 368L973 443V624L841 550z" fill="#7ab8f0" fill-opacity=".4" />
                            <path d="M841 368L973 443L841 480z" fill="#5a9ae0" fill-opacity=".4" />
                            <path d="M820 653l20 8v-8z" fill="#7fb0dc" />

                            <path d="M841 157L973 120V200L841 238zM973 120L1239 268V348L973 200z" fill="#00008c" fill-opacity=".2" />
                            <path d="M1106 194V275L841 349V268z" fill="#00008c" fill-opacity=".09" />
                            <path d="M1106 194V275L1011 221z" fill="#00008c" fill-opacity=".12" />
                            <path d="M986 227L1011 221L1106 275L1083 281zM1119 301L1144 295L1239 348L1216 355z" fill="#00008c" fill-opacity=".1" />
                            <path d="M1239 268V348L841 461V380z" fill="#00008c" fill-opacity=".09" />
                            <path d="M1239 268V348L1142 295z" fill="#00008c" fill-opacity=".12" />
                            <path d="M841 268L973 343V423L841 349z" fill="#000080" fill-opacity=".1" />

                            <g fill="none" stroke="#000" stroke-width="1">
                                <path d="M841 257L973 220L1239 368L973 443L841 480M841 368L1106 294M841 368L973 443" />
                                <path d="M388 565L654 713L1239 548" stroke-width="1.500" />
                                <path d="M973 400L1239 548M841 437L973 400M841 550L973 624" stroke="#555" stroke-width="1.500" />
                                <path d="M973 220V400" stroke="#777" />
                                <path d="M973 443V624M1239 368V548M654 640V713M840 650V661" stroke="#555" stroke-width="2" />
                            </g>

                            {#each supports as [x, y]}
                                <path d="M{x - 5} {y - 2}l5-2 5 2v2l-3 2h-4l-3-2z" fill="#d3dfd3" />
                                <path d="M{x} {y + 3}l-3 6 5 1-4 4M{x - 3} {y + 15}h6" fill="none" stroke="#9fb59f" stroke-width="1" opacity=".7" />
                            {/each}

                            <g fill="none" stroke="#00008c" stroke-width="1">
                                <path d="M841 157L973 120L1239 268M841 238L973 200L1239 348M1106 194L841 268M1106 275L841 349" />
                                <path d="M1239 268L841 380M1239 348L841 461M841 268L973 343V423L841 349" />
                            </g>
                            {#each arrows as [x, y1, y2]}
                                <path d="M{x} {y1}V{y2 - 4}" stroke="#00008c" stroke-width="1.500" />
                                <path d="M{x - 3} {y2 - 7}h6l-3 8z" fill="#00008c" />
                            {/each}
                            {#each labels as [x, y]}
                                <rect x={x - 4} y={y - 11} width="36" height="14" fill="#fff" />
                                <text {x} {y} class="load">30.000</text>
                            {/each}
                            {#each loadNodes as [x, y]}<rect x={x - 2} y={y - 2} width="4" height="4" fill="#00008c" />{/each}
                            {#each corners as [x, y]}<rect x={x - 2} y={y - 2} width="4" height="4" fill="#a00000" />{/each}

                            <path d="M654 713l26-7" stroke="#f00" stroke-width="2" />
                            <path d="M678 703l9 2-8 5z" fill="#a00000" />
                            <path d="M654 713l17 9" stroke="#0f0" stroke-width="2" />
                            <path d="M672 719l6 8-8-2z" fill="#008c00" />
                            <path d="M654 713v30" stroke="#00f" stroke-width="2" />
                            <path d="M651 741h6l-3 11z" fill="#0000a0" />
                            <text x="692" y="706" class="axis" fill="#d00000">X</text>
                            <text x="680" y="734" class="axis" fill="#00d000">Y</text>
                            <text x="651" y="764" class="axis" fill="#0000e0">Z</text>
                        </g>
                    </svg>
                    <p class="caseinfo">CC1 : Peso propio<br />Cargas [kN/m]</p>

                    <div class="dialog" role="dialog" aria-label="Personalizar">
                        <div class="dlgtitle">
                            <h2>Personalizar</h2>
                            <button class="dlgclose" aria-label="Cerrar diálogo"><svg width="13" height="13" viewBox="0 0 13 13"><path d="M2 2l9 9M11 2l-9 9" stroke="#fff" stroke-width="2" /></svg></button>
                        </div>
                        <div class="dlgbody">
                            <div class="dlgtabs">
                                {#each dialogTabs as t}<button class:active={t === 'Opciones'}>{t}</button>{/each}
                            </div>
                            <div class="sheet">
                                <div class="left">
                                    <div class="group design">
                                        <h3><label for="design">Diseño</label></h3>
                                        <div class="combo">
                                            <select id="design" bind:value={chosen}>
                                                {#each styles as s}<option>{s}</option>{/each}
                                            </select>
                                            <span class="combobtn">{@render chevron(0)}</span>
                                            <ul class="list" role="listbox" aria-label="Diseño">
                                                {#each styles as s}
                                                    <li role="option" aria-selected={s === chosen} class:sel={s === chosen}>{s}</li>
                                                {/each}
                                            </ul>
                                        </div>
                                    </div>
                                    <div class="group second">
                                        <h3></h3>
                                        <div class="offcombo"><span>{@render chevron(0)}</span></div>
                                    </div>
                                    <div class="group rest"></div>
                                </div>
                                <div class="group right"></div>
                            </div>
                            <div class="dlgfoot">
                                <button class="sq help" aria-label="Ayuda">{@render icon(icons.help)}</button>
                                <button class="sq" aria-label="Restablecer menú">{@render icon(icons.bolt)}</button>
                                <button class="sq" aria-label="Restablecer barras">{@render icon(icons.bolt)}</button>
                                <button class="close">Cerrar</button>
                            </div>
                        </div>
                        <svg class="pointer" width="13" height="21" viewBox="0 0 13 21" aria-hidden="true"><path d="M1 1v16l4-4 3 7 2-1-3-7h5z" fill="#fff" stroke="#000" /></svg>
                    </div>
                </section>

                <section class="tablepane">
                    <div class="caption"><h2>1.1 Nudos</h2>{@render pinClose()}</div>
                    <div class="bar tbar">{@render tools(tableBar)}</div>
                    <div class="gridarea">
                        <table>
                            <colgroup><col class="num" /><col class="a" /><col class="b" /><col class="c" /><col class="d" /><col class="d" /><col class="d" /><col /></colgroup>
                            <thead>
                                <tr class="letters">
                                    <th rowspan="3" class="corner">Nudo<br />núm.</th>
                                    {#each letters as l}<th class:hot={l === 'C'}>{l}</th>{/each}
                                </tr>
                                <tr class="h1"><th></th><th>Nudo de</th><th>Sistema de</th><th colspan="3">Coordenadas del nudo</th><th></th></tr>
                                <tr class="h2"><th>Tipo de nudo</th><th>referencia</th><th>coordenadas</th><th>X [m]</th><th>Y [m]</th><th>Z [m]</th><th>Comentario</th></tr>
                            </thead>
                            <tbody>
                                {#each nudos as coords, i}
                                    <tr>
                                        <th scope="row" class:hot={i === 0}>{i + 1}</th>
                                        <td>Estándar</td>
                                        <td class="mid">0</td>
                                        <td class:focus={i === 0}><u>C</u>artesiano</td>
                                        {#each coords as v}<td class="r">{v}</td>{/each}
                                        <td></td>
                                    </tr>
                                {/each}
                            </tbody>
                        </table>
                        <div class="vscroll">
                            <button aria-label="Subir tabla">{@render chevron(180)}</button>
                            <span class="vthumb tiny"></span>
                            <span class="fill"></span>
                            <button aria-label="Bajar tabla">{@render chevron(0)}</button>
                        </div>
                    </div>
                    <div class="sheettabs">
                        {#each sheets as s, i}<button class:active={i === 0}>{s}</button>{/each}
                        <div class="pager">
                            <button aria-label="Primera"><svg width="9" height="8" viewBox="0 0 9 8"><path d="M1 0v8h1V0zM8 0v8L4 4z" fill="#999" /></svg></button>
                            <button aria-label="Anterior"><svg width="9" height="8" viewBox="0 0 9 8"><path d="M6 0v8L2 4z" fill="#999" /></svg></button>
                            <button aria-label="Siguiente"><svg width="9" height="8" viewBox="0 0 9 8"><path d="M3 0v8l4-4z" /></svg></button>
                            <button aria-label="Última"><svg width="9" height="8" viewBox="0 0 9 8"><path d="M1 0v8l4-4zM6 0v8h2V0z" /></svg></button>
                        </div>
                    </div>
                    <div class="strip"></div>
                </section>
            </div>
        </div>

        <footer class="status">
            {#each toggles as t}<button>{t}</button>{/each}
            <div class="cells"><span class="wide"></span><span class="short"></span><span></span><span></span><span class="end"></span></div>
            <svg class="resize" width="12" height="12" viewBox="0 0 12 12" aria-hidden="true"><path d="M9 0h2v2H9zM9 4h2v2H9zM5 4h2v2H5zM9 8h2v2H9zM5 8h2v2H5zM1 8h2v2H1z" fill="#aaa" /></svg>
        </footer>
    </div>
</div>

<style>
    :global(body) {
        background: #fff;
        overflow: hidden;
    }
    .app {
        display: flex;
        flex-direction: column;
        height: 100vh;
        padding-bottom: 2px;
        box-sizing: border-box;
        font: 11px/16px "DejaVu Sans Condensed", "DejaVu Sans", sans-serif;
        color: #000;
    }
    button {
        border: 0;
        padding: 0;
        margin: 0;
        background: none;
        font: inherit;
        color: inherit;
        display: flex;
        align-items: center;
        justify-content: center;
    }
    h1, h2, h3, p, ul {
        margin: 0;
        padding: 0;
        font: inherit;
    }
    ul {
        list-style: none;
    }
    .icon {
        display: block;
        flex: none;
    }
    .fill {
        flex: 1;
    }

    /* window title */
    .title {
        height: 29px;
        flex: none;
        display: flex;
        align-items: center;
        padding: 0 10px 0 9px;
        border-radius: 5px 5px 0 0;
        background: linear-gradient(#9c9da3 0, #96979b 8px, #8c8c8c 9px, #9a9a9a);
    }
    .title h1 {
        flex: 1;
        padding-right: 6px;
        text-align: center;
        color: #d8d8d8;
        font: 500 13px/16px "Noto Sans", sans-serif;
    }
    .winbtns {
        display: flex;
        gap: 14px;
    }
    .winbtns.small {
        gap: 7px;
        margin-left: auto;
        padding: 6px 5px 0 0;
    }
    .mini {
        width: 9px;
        height: 14px;
    }
    .frame {
        flex: 1;
        min-height: 0;
        display: flex;
        flex-direction: column;
        background: #535353;
        border: solid #8c8c8c;
        border-width: 0 4px;
    }

    .menu {
        height: 24px;
        flex: none;
        display: flex;
        align-items: center;
        padding-left: 4px;
        font: 11px/16px "Open Sans", "Noto Sans", sans-serif;
        color: #fff;
    }
    .grip {
        flex: none;
        width: 2px;
        height: 14px;
        margin-right: 4px;
        background: repeating-linear-gradient(#ddd 0 2px, transparent 2px 4px);
    }
    .grip.dark {
        margin: 0 4px 0 3px;
        background: repeating-linear-gradient(#222 0 2px, #dde 2px 4px);
    }
    .logo {
        margin-right: 1px;
    }
    .menuitem {
        padding: 0 7px 0 8px;
        display: block;
    }
    .bars {
        display: flex;
        flex: none;
        height: 26px;
        margin-left: 1px;
        overflow: hidden;
    }
    .bar {
        flex: none;
        display: flex;
        align-items: center;
        height: 25px;
        border-radius: 3px;
        background: linear-gradient(#ced1d7, #c2c6cd 40%, #9ba2ad);
        padding-right: 2px;
    }
    .tool {
        width: 22px;
        height: 22px;
        flex: none;
    }
    .tool.on {
        background: linear-gradient(#fdd08a, #fba738 50%, #ffe27a);
        box-shadow: inset 0 0 0 1px #fff0b8;
    }
    .sep {
        width: 2px;
        height: 15px;
        margin: 0 3px;
        flex: none;
        background: linear-gradient(90deg, #666e7c 50%, #fff 50%);
    }
    .drop {
        width: 13px;
        height: 22px;
        flex: none;
    }
    .drop::after, .casebtn::after {
        content: "";
        border: 3px solid transparent;
        border-top-color: #5a5f68;
        border-bottom: 0;
    }
    .case {
        width: 217px;
        height: 18px;
        margin: 0 2px;
        display: flex;
        background: #fff;
    }
    .case select {
        flex: 1;
        min-width: 0;
        appearance: none;
        border: 0;
        padding: 0 3px;
        background: none;
        color: #000;
        font: 11px/16px "Open Sans", sans-serif;
    }
    .casebtn {
        width: 14px;
        display: flex;
        align-items: center;
        justify-content: center;
        background: #c3c7ce;
        border: 1px solid #fff;
    }

    .main {
        flex: 1;
        min-height: 0;
        display: flex;
        gap: 4px;
    }
    .side {
        width: 312px;
        flex: none;
        display: flex;
        flex-direction: column;
    }
    .panel {
        flex: 1;
        min-height: 0;
        display: flex;
        flex-direction: column;
        border: 1px solid #e6e6e6;
        background: #e6e6ea;
    }
    .caption {
        height: 20px;
        flex: none;
        display: flex;
        align-items: center;
        gap: 7px;
        padding: 0 5px 0 3px;
        background: #9b9d9c;
        color: #3a3a3a;
        font: 11px/16px "Noto Sans", sans-serif;
    }
    .caption h2 {
        flex: 1;
    }
    .treebox {
        flex: 1;
        min-height: 0;
        display: flex;
        flex-direction: column;
        margin: 2px 2px 1px;
        border: 1px solid #8c8c8c;
        border-right: 0;
        border-bottom: 0;
        background: #fcfbf3;
    }
    .treerow {
        flex: 1;
        min-height: 0;
        display: flex;
    }
    .tree {
        flex: 1;
        min-width: 0;
        overflow: hidden;
        padding-left: 2px;
    }
    .tree li {
        display: flex;
        height: 16px;
        white-space: nowrap;
    }
    .guide {
        position: relative;
        width: 19px;
        flex: none;
        display: flex;
        align-items: center;
        justify-content: center;
    }
    .guide.line::before, .guide.half::before {
        content: "";
        position: absolute;
        left: 9px;
        top: 0;
        bottom: 0;
        border-left: 1px dotted #a5a596;
    }
    .guide.half::before {
        bottom: 8px;
    }
    .guide.own::after {
        content: "";
        position: absolute;
        left: 10px;
        right: 0;
        top: 8px;
        border-top: 1px dotted #a5a596;
    }
    .exp {
        position: relative;
        z-index: 1;
        width: 9px;
        height: 9px;
        border: 1px solid #7b8aa3;
        border-radius: 1px;
        background: linear-gradient(#000, #000) center / 5px 1px no-repeat, linear-gradient(#fff, #dcdce4);
    }
    .exp.plus {
        background: linear-gradient(#000, #000) center / 5px 1px no-repeat, linear-gradient(#000, #000) center / 1px 5px no-repeat, linear-gradient(#fff, #dcdce4);
    }
    .name {
        padding-left: 5px;
    }
    .name.bold {
        font-weight: 700;
    }
    .vscroll {
        width: 17px;
        flex: none;
        display: flex;
        flex-direction: column;
        background: #f1f1f8;
    }
    .vscroll button, .hscroll button {
        width: 17px;
        height: 17px;
        flex: none;
        border: 1px solid #9a9cb4;
        border-radius: 2px;
        background: linear-gradient(#fafafd, #cdcedd);
    }
    .vthumb {
        height: 518px;
        margin-top: 10px;
        box-sizing: border-box;
        border: 1px solid #9a9cb4;
        border-radius: 2px;
        background: repeating-linear-gradient(#9a9cb4 0 1px, transparent 1px 2px) center / 7px 8px no-repeat, linear-gradient(90deg, #f8f8fc, #e8e8f0 50%, #c4c6d6);
    }
    .vthumb.tiny {
        height: 9px;
        margin-top: 0;
        background: linear-gradient(90deg, #f8f8fc, #e8e8f0 50%, #c4c6d6);
    }
    .hscroll {
        height: 17px;
        margin-right: 17px;
        flex: none;
        display: flex;
        background: #f1f1f8;
        box-shadow: 17px 0 #e0dfe3;
    }
    .hthumb {
        width: 148px;
        margin-left: 1px;
        box-sizing: border-box;
        display: flex;
        align-items: center;
        justify-content: center;
        border: 1px solid #9a9cb4;
        border-radius: 2px;
        background: linear-gradient(#f8f8fc, #e8e8f0 50%, #c4c6d6);
    }
    .hthumb i {
        width: 8px;
        height: 6px;
        background: repeating-linear-gradient(90deg, #9a9cb4 0 1px, transparent 1px 2px);
    }
    .navtabs {
        height: 23px;
        flex: none;
        display: flex;
        gap: 4px;
        padding-left: 4px;
        font: 11px/16px "Open Sans", sans-serif;
        color: #fff;
    }
    .navtabs button {
        gap: 2px;
        padding: 0 4px;
        height: 20px;
    }
    .navtabs .active {
        padding: 0 4px 0 1px;
        background: linear-gradient(#f4fafc, #dde4ea);
        border-radius: 0 0 3px 3px;
        color: #111;
        box-shadow: inset 0 0 0 1px #b8e8f0;
    }

    .work {
        flex: 1;
        min-width: 0;
        display: flex;
        flex-direction: column;
        gap: 4px;
    }
    .view {
        flex: 1;
        min-height: 0;
        position: relative;
        border: 2px solid #8a8a8a;
        border-right: 1px solid #d8d8d0;
        border-bottom: 1px solid #ece9d8;
        background: #fff;
    }
    .scene {
        display: block;
        position: absolute;
        inset: 0;
    }
    .load, .axis {
        font: 10px "Liberation Sans", sans-serif;
    }
    .load {
        fill: #00008c;
    }
    .caseinfo {
        position: relative;
        padding: 6px 5px;
        line-height: 14px;
    }

    /* customise dialog */
    .dialog {
        position: absolute;
        left: 25px;
        top: 52px;
        width: 554px;
        height: 495px;
        box-sizing: border-box;
        display: flex;
        flex-direction: column;
        border: 2px solid #686883;
        border-radius: 7px 7px 0 0;
        background: #e0dfe3;
    }
    .dlgtitle {
        height: 26px;
        flex: none;
        display: flex;
        align-items: center;
        justify-content: space-between;
        padding: 0 3px 0 4px;
        border-radius: 5px 5px 0 0;
        background: linear-gradient(#f8f8fc, #a9a9c0 3px, #b8b8ca 8px, #fff 20px, #d8d8e2);
        border-bottom: 1px solid #686883;
        font: bold 12px/16px "DejaVu Sans Condensed", "DejaVu Sans", sans-serif;
    }
    .dlgclose {
        width: 21px;
        height: 21px;
        border: 1px solid #fff;
        border-radius: 4px;
        background: linear-gradient(#e8a090, #d0524a 40%, #c04040);
        box-shadow: inset 0 0 0 1px #a83838;
    }
    .dlgbody {
        flex: 1;
        min-height: 0;
        display: flex;
        flex-direction: column;
        padding: 5px 9px 7px 7px;
    }
    .dlgtabs {
        display: flex;
        align-items: flex-end;
        gap: 1px;
        height: 21px;
        flex: none;
        padding-left: 2px;
    }
    .dlgtabs button {
        height: 18px;
        padding: 0 2px 0 3px;
        border: 1px solid #91a7b4;
        border-bottom: 0;
        border-radius: 3px 3px 0 0;
        background: linear-gradient(#fff, #f4f4fb 60%, #cfcfe2);
    }
    .dlgtabs .active {
        height: 20px;
        padding: 0 6px 2px;
        border-top: 2px solid #f0b040;
        background: #fcfcfe;
        z-index: 1;
        margin: 0 0 -1px -1px;
    }
    .sheet {
        flex: 1;
        min-height: 0;
        display: flex;
        gap: 7px;
        padding: 10px 5px 5px 8px;
        border: 1px solid #919b9c;
        background: #fbfbfa;
    }
    .left {
        width: 255px;
        flex: none;
        display: flex;
        flex-direction: column;
    }
    .group {
        box-sizing: border-box;
        background: #f0f4f9;
        border: 1px solid #dbe3f0;
        border-right-color: #a6a6e6;
        border-bottom-color: #a6a6e6;
    }
    .group h3 {
        height: 15px;
        padding-left: 1px;
        margin: -1px -1px 0;
        line-height: 16px;
        background: #dbe6f4;
        clip-path: polygon(0 0, calc(100% - 10px) 0, 100% 10px, 100% 100%, 0 100%);
        color: #1a4478;
    }
    .design {
        height: 46px;
    }
    .second {
        height: 112px;
        margin-top: 19px;
    }
    .group.rest {
        flex: 1;
        margin-top: 9px;
    }
    .right {
        flex: 1;
    }
    .combo {
        position: relative;
        margin: 5px 3px 0 2px;
        height: 20px;
        display: flex;
        box-sizing: border-box;
        border: 1px solid #7f9db9;
        background: #fff;
    }
    .combo select {
        flex: 1;
        min-width: 0;
        appearance: none;
        border: 0;
        padding: 0 2px;
        background: none;
        font: inherit;
        color: #000;
    }
    .combobtn {
        width: 15px;
        display: flex;
        align-items: center;
        justify-content: center;
        border: 1px solid #a0a2ba;
        border-radius: 2px;
        background: linear-gradient(#fafafd, #c6c7d8);
    }
    .list {
        position: absolute;
        z-index: 2;
        left: -1px;
        right: -1px;
        top: 19px;
        border: 1px solid #000;
        background: #fff;
    }
    .list li {
        height: 13px;
        line-height: 13px;
        padding-left: 1px;
    }
    .list .sel {
        background: #0000f5;
        color: #fff;
    }
    .offcombo {
        width: 60px;
        height: 20px;
        margin: 70px 0 0 21px;
        padding: 1px;
        box-sizing: border-box;
        display: flex;
        justify-content: flex-end;
        border: 1px solid #aaa;
        background: #fbfbfa;
    }
    .offcombo span {
        width: 15px;
        display: flex;
        align-items: flex-end;
        justify-content: center;
        background: #e9e8e2;
        opacity: .5;
    }
    .dlgfoot {
        flex: none;
        height: 24px;
        display: flex;
        align-items: center;
        gap: 4px;
        padding: 12px 1px 3px 3px;
    }
    .sq {
        width: 25px;
        height: 21px;
        border: 1px solid #003c74;
        border-radius: 3px;
        background: linear-gradient(#fff, #f0f0f6 60%, #c8c8dc);
    }
    .help {
        margin-right: 7px;
    }
    .close {
        width: 73px;
        height: 21px;
        margin-left: auto;
        border: 1px solid #003c74;
        border-radius: 3px;
        background: linear-gradient(#fff, #f0f0f6 60%, #d0d0e2);
        box-shadow: inset 0 0 0 1px #b8c8ec, inset 0 -2px #6a86d8;
    }
    .pointer {
        position: absolute;
        z-index: 3;
        left: 212px;
        top: 198px;
    }

    /* table pane */
    .tablepane {
        flex: none;
        display: flex;
        flex-direction: column;
        background: #e0dfe3;
        font-family: "Liberation Sans", sans-serif;
    }
    .tbar {
        padding-left: 9px;
        border-radius: 0;
        border-bottom: 1px solid #222;
        overflow: hidden;
    }
    .gridarea {
        display: flex;
        gap: 2px;
        height: 98px;
        padding: 2px 2px 15px;
        border-left: 1px solid #000;
    }
    table {
        flex: 1;
        min-width: 0;
        align-self: flex-start;
        table-layout: fixed;
        border-collapse: collapse;
        line-height: 14px;
    }
    .num { width: 45px; }
    .a { width: 84px; }
    .b { width: 72px; }
    .c { width: 91px; }
    .d { width: 78px; }
    th, td {
        padding: 0;
        font-weight: 400;
        white-space: nowrap;
        border: 1px solid #a0a0a0;
    }
    th {
        background: #f0f0f0;
        text-align: center;
    }
    tr {
        height: 16px;
    }
    tr.letters {
        height: 14px;
    }
    .letters th {
        border: 1px solid #000;
        background: #e0e0e0;
        line-height: 12px;
    }
    .letters .corner {
        background: #e4e4e6;
        border: 1px solid #a0a0a0;
        line-height: 14px;
        padding-top: 6px;
    }
    .h1 th {
        border-bottom: 0;
    }
    .h2 th {
        border-top: 0;
    }
    tbody th {
        background: #e0e0e0;
        border: 1px solid #000;
    }
    .letters th.hot, th.hot {
        background: #3399ff;
        color: #fff;
    }
    td {
        background: #fff;
        padding: 0 4px;
    }
    .mid {
        text-align: center;
    }
    .r {
        text-align: right;
    }
    .focus {
        outline: 1px dotted #000;
        outline-offset: -2px;
    }
    .gridarea .vscroll {
        width: 15px;
    }
    .gridarea .vscroll button {
        width: 15px;
    }
    .sheettabs {
        height: 18px;
        display: flex;
    }
    .sheettabs > button {
        height: 17px;
        padding: 0 3px 0 4px;
        border: 1px solid #000;
        border-left: 0;
        border-radius: 0 0 5px 0;
    }
    .sheettabs > .active {
        padding: 0 5px 0 4px;
        border-top-color: #e0dfe3;
    }
    .pager {
        flex: 1;
        display: flex;
        justify-content: flex-end;
        border-top: 1px solid #000;
        border-bottom: 1px solid #888;
    }
    .pager button {
        width: 16px;
        border: 1px solid #fff;
        border-right-color: #888;
        border-bottom-color: #888;
        box-sizing: border-box;
    }
    .strip {
        height: 17px;
        background: linear-gradient(#c4c4cc, #e8e8ec 40%, #dcdce0);
    }

    .status {
        height: 23px;
        flex: none;
        display: flex;
        align-items: center;
        justify-content: flex-end;
        gap: 2px;
        background: linear-gradient(#3d434f, #383c44 8px, #2b2b2b 9px, #3a3a38);
        font: 11px/16px "Liberation Sans", sans-serif;
        color: #fff;
        margin-left: -3px;
    }
    .status button {
        height: 18px;
        padding: 0 1px;
        border: 1px solid #777;
        border-right-color: #fff;
        border-bottom-color: #fff;
    }
    .cells {
        display: flex;
        height: 17px;
    }
    .cells span {
        width: 73px;
        border-left: 1px solid #999;
    }
    .cells .wide {
        width: 153px;
    }
    .cells .short {
        width: 55px;
    }
    .cells .end {
        width: 90px;
    }
    .resize {
        margin-left: -14px;
        align-self: flex-end;
    }
</style>
